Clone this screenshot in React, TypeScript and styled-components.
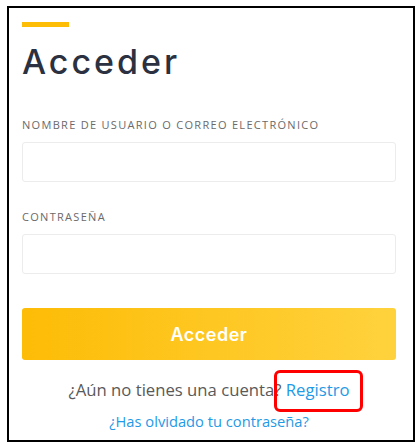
import React from 'react';
import styled, { createGlobalStyle } from 'styled-components';

const colors = {
  navy: '#2b3140',
  label: '#6a6a6a',
  text: '#595959',
  link: '#1f9ae6',
  line: '#ececec',
  yellowFrom: '#fdbc06',
  yellowTo: '#ffd23d',
  alert: '#ff0000',
};

const GlobalStyle = createGlobalStyle`
  html, body {
    margin: 0;
    padding: 0;
    background: #ffffff;
  }
  body {
    font-family: 'Open Sans', 'Noto Sans', sans-serif;
  }
  * {
    box-sizing: border-box;
  }
`;

function App() {
  return (
    <>
      <GlobalStyle />
      <StyledRoot>
        <StyledFrame>
          <Accent />
          <Title>Acceder</Title>

          <Field>
            <Label htmlFor="user">Nombre de usuario o correo electrónico</Label>
            <Input id="user" type="text" />
          </Field>

          <Field>
            <Label htmlFor="pass">Contraseña</Label>
            <Input id="pass" type="password" />
          </Field>

          <SubmitButton type="button">Acceder</SubmitButton>

          <SignupLine>
            ¿Aún no tienes una cuenta? <Highlighted href="#">Registro</Highlighted>
          </SignupLine>
          <ForgotLink href="#">¿Has olvidado tu contraseña?</ForgotLink>
        </StyledFrame>
      </StyledRoot>
    </>
  );
}

export default App;

const StyledRoot = styled.div`
  width: 420px;
  height: 447px;
  padding: 6px 5px 5px 7px;
`;

const StyledFrame = styled.div`
  width: 408px;
  height: 436px;
  border: 2px solid #000;
  padding: 14px 17px 0 13px;
  display: flex;
  flex-direction: column;
`;

const Accent = styled.div`
  width: 47px;
  height: 5px;
  background: ${colors.yellowFrom};
`;

const Title = styled.h1`
  margin: 15px 0 0 0;
  font-family: Inter, 'Noto Sans', sans-serif;
  font-weight: 500;
  font-size: 34px;
  line-height: 40px;
  letter-spacing: 3px;
  color: ${colors.navy};
`;

const Field = styled.div`
  display: flex;
  flex-direction: column;
  gap: 10px;
  margin-top: 35px;

  & + & {
    margin-top: 27px;
  }
`;

const Label = styled.label`
  font-size: 11px;
  line-height: 15px;
  letter-spacing: 1.3px;
  text-transform: uppercase;
  color: ${colors.label};
`;

const Input = styled.input`
  width: 100%;
  height: 40px;
  border: 1px solid ${colors.line};
  border-radius: 3px;
  background: #fff;
  outline: none;
`;

const SubmitButton = styled.button`
  margin-top: 34px;
  width: 100%;
  height: 52px;
  border: none;
  border-radius: 3px;
  background: linear-gradient(90deg, ${colors.yellowFrom}, ${colors.yellowTo});
  color: #fff;
  font-family: Inter, 'Noto Sans', sans-serif;
  font-weight: 600;
  font-size: 18px;
  letter-spacing: 0.5px;
`;

const SignupLine = styled.p`
  margin: 18px 0 0 0;
  text-align: center;
  font-size: 16.7px;
  line-height: 24px;
  color: ${colors.text};
`;

const Highlighted = styled.a`
  position: relative;
  color: ${colors.link};
  text-decoration: none;

  &::after {
    content: '';
    position: absolute;
    top: -8px;
    bottom: -11px;
    left: -12px;
    right: -14px;
    border: 3px solid ${colors.alert};
    border-radius: 6px;
  }
`;

const ForgotLink = styled.a`
  margin-top: 9px;
  align-self: center;
  font-size: 14.7px;
  line-height: 20px;
  color: ${colors.link};
  text-decoration: none;
`;
